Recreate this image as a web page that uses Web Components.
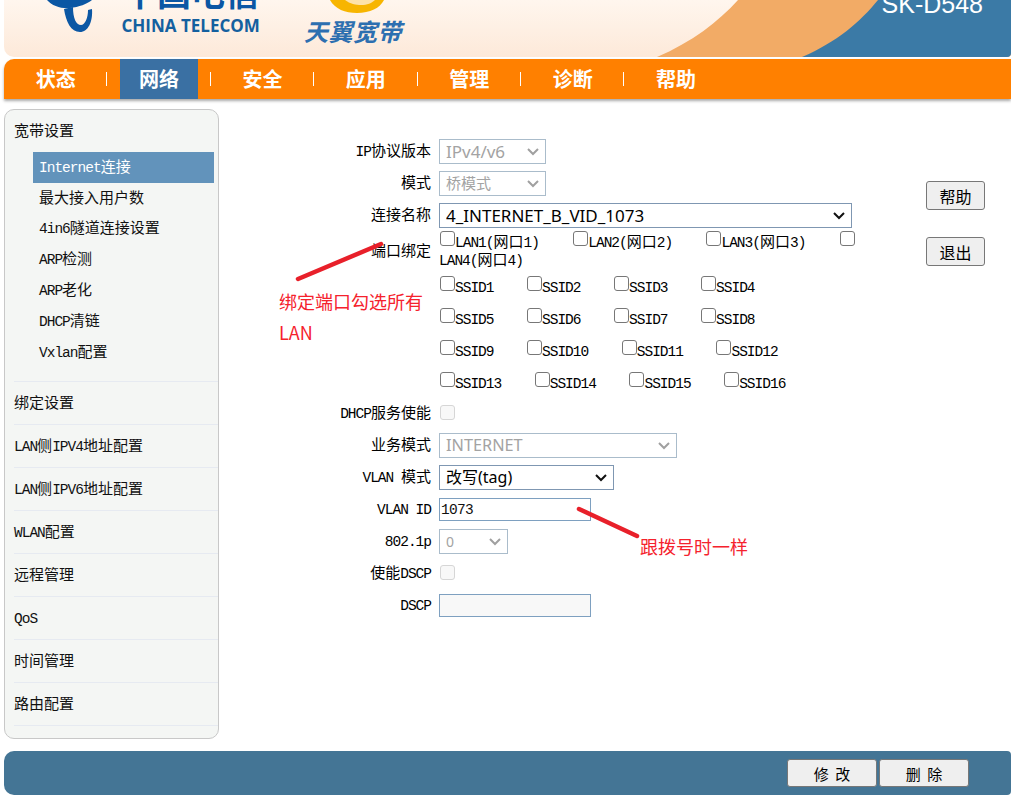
<!DOCTYPE html>
<html lang="zh">
<head>
<meta charset="utf-8">
<title>SK-D548</title>
<style>
  html, body { margin: 0; height: 795px; overflow: hidden; background: #fff; }
  body { position: relative; font: 15px "Noto Sans CJK SC", "Liberation Sans", sans-serif; color: #000; }
</style>
</head>
<body>
<tel-header></tel-header>
<tel-nav active="1" items="状态,网络,安全,应用,管理,诊断,帮助"></tel-nav>
<main-area>
  <side-bar slot="side">
    <side-group label="宽带设置">
      <side-item active label="Internet连接"></side-item>
      <side-item label="最大接入用户数"></side-item>
      <side-item label="4in6隧道连接设置"></side-item>
      <side-item label="ARP检测"></side-item>
      <side-item label="ARP老化"></side-item>
      <side-item label="DHCP清链"></side-item>
      <side-item label="Vxlan配置"></side-item>
    </side-group>
    <side-group label="绑定设置"></side-group>
    <side-group label="LAN侧IPV4地址配置"></side-group>
    <side-group label="LAN侧IPV6地址配置"></side-group>
    <side-group label="WLAN配置"></side-group>
    <side-group label="远程管理"></side-group>
    <side-group label="QoS"></side-group>
    <side-group label="时间管理"></side-group>
    <side-group label="路由配置"></side-group>
  </side-bar>
  <wan-form slot="form"></wan-form>
  <ui-btn slot="actions" label="帮助"></ui-btn>
  <ui-btn slot="actions" label="退出"></ui-btn>
</main-area>
<tel-footer>
  <ui-btn wide label="修 改"></ui-btn>
  <ui-btn wide label="删 除"></ui-btn>
</tel-footer>
<red-notes></red-notes>

<script>
// ascii runs get the half-width mono treatment, like the old bitmap font
const lat = (s) => s.replace(/[\x20-\x7e]+/g, (m) => `<m-l>${m}</m-l>`);

class MonoLatin extends HTMLElement {
  constructor() {
    super();
    this.attachShadow({ mode: 'open' }).innerHTML = `<style>:host { display: inline; white-space: pre; font-family: "Liberation Mono", monospace; font-size: 14.5px; letter-spacing: -1px; }</style><slot></slot>`;
  }
}
customElements.define('m-l', MonoLatin);

class TelHeader extends HTMLElement {
  constructor() {
    super();
    this.attachShadow({ mode: 'open' }).innerHTML = `
      <style>
        :host { display: block; position: relative; height: 57px; margin-left: 4px; overflow: hidden;
          border-radius: 0 0 4px 10px; background: linear-gradient(#fff6ee, #fde9d9); }
        svg { position: absolute; left: 0; top: 0; }
        span { position: absolute; white-space: nowrap; }
        .cn { left: 119px; top: -30px; font: 700 34px/44px "Noto Sans CJK SC", sans-serif; color: #0b57a4; }
        .en { left: 117.5px; top: 17px; font: 700 17px/18px "Open Sans", sans-serif; color: #14609f; letter-spacing: 0; }
        .tw { left: 300px; top: 15px; font: italic 700 24px/32px "Noto Sans CJK SC", sans-serif; color: #2d6fb0; letter-spacing: 0.5px; }
        .model { right: 28px; top: -10px; font: 25px/28px "Liberation Sans", sans-serif; color: #fff; }
      </style>
      <svg width="1007" height="57" viewBox="4 0 1007 57">
        <path fill="#f2ab66" d="M657 57C692 42 718 22 738 0H1011V57Z"/>
        <path fill="#3b7aa6" d="M802 57C837 42 860 22 878 0H1011V57Z"/>
        <path fill="#0b57a4" d="M47 0C52 6 62 9 70 8C79 7 87 4 92 0Z"/>
        <path fill="#0b57a4" d="M64 9L73 7C73 18 76 25 81 25C85 25 88 18 88 10L92 9C93 22 88 32 80 32C71 32 66 22 64 9Z"/>
        <path fill="#f7b500" d="M330 0C335 9 345 13 357 13C370 13 380 8 384 0Z"/>
        <path fill="#fde2a8" d="M345 0C350 4 356 5 361 5C367 5 372 3 375 0Z"/>
      </svg>
      <span class="cn">中国电信</span>
      <span class="en">CHINA TELECOM</span>
      <span class="tw">天翼宽带</span>
      <span class="model">SK-D548</span>`;
  }
}
customElements.define('tel-header', TelHeader);

class TelNav extends HTMLElement {
  constructor() {
    super();
    this.attachShadow({ mode: 'open' });
  }
  connectedCallback() {
    const items = this.getAttribute('items').split(',');
    const active = +this.getAttribute('active');
    this.shadowRoot.innerHTML = `
      <style>
        :host { display: flex; height: 40px; margin: 2px 0 10px 4px; background: #ff8000;
          border-radius: 10px 0 0 0; box-shadow: 0 2px 3px #a9a9a9; }
        div { position: relative; width: 103.4px; display: flex; justify-content: center; align-items: center; }
        b { width: 78px; height: 40px; display: flex; justify-content: center; align-items: center;
          font: 700 20px/1 "Noto Sans CJK SC", sans-serif; color: #fff; }
        .on b { background: #3a70a3; }
        i { position: absolute; right: 0; top: 13px; width: 1px; height: 14px; background: #fff; }
      </style>
      ${items.map((t, n) => `<div class="${n === active ? 'on' : ''}"><b>${t}</b>${n < items.length - 1 ? '<i></i>' : ''}</div>`).join('')}`;
  }
}
customElements.define('tel-nav', TelNav);

class MainArea extends HTMLElement {
  constructor() {
    super();
    this.attachShadow({ mode: 'open' }).innerHTML = `
      <style>
        :host { display: flex; height: 630px; margin-left: 4px; }
        .form { width: 707px; flex: none; padding-top: 26px; box-sizing: border-box; }
        .actions { width: 59px; flex: none; padding-top: 72px; display: flex; flex-direction: column; gap: 27px; }
      </style>
      <slot name="side"></slot>
      <div class="form"><slot name="form"></slot></div>
      <div class="actions"><slot name="actions"></slot></div>`;
  }
}
customElements.define('main-area', MainArea);

class SideBar extends HTMLElement {
  constructor() {
    super();
    this.attachShadow({ mode: 'open' }).innerHTML = `
      <style>
        :host { display: block; width: 215px; height: 630px; flex: none; box-sizing: border-box; padding-left: 9px;
          background: #f4f6f4; border: 1px solid #c8c8c8; border-radius: 10px; }
      </style><slot></slot>`;
  }
}
customElements.define('side-bar', SideBar);

class SideGroup extends HTMLElement {
  constructor() {
    super();
    this.attachShadow({ mode: 'open' });
  }
  connectedCallback() {
    this.shadowRoot.innerHTML = `
      <style>
        :host { display: block; border-bottom: 1px solid #e6eaf1; }
        .t { height: 42px; display: flex; align-items: center; white-space: nowrap; color: #111; }
        .t span { margin-top: -3px; }
        .sub { padding: 0 4px 13px 19px; }
        .sub[hidden] { display: none; }
      </style>
      <div class="t"><span>${lat(this.getAttribute('label'))}</span></div>
      <div class="sub" ${this.children.length ? '' : 'hidden'}><slot></slot></div>`;
  }
}
customElements.define('side-group', SideGroup);

class SideItem extends HTMLElement {
  constructor() {
    super();
    this.attachShadow({ mode: 'open' });
  }
  connectedCallback() {
    this.shadowRoot.innerHTML = `
      <style>
        :host { display: flex; align-items: center; height: 30.8px; padding-left: 6px; color: #111; white-space: nowrap; }
        :host([active]) { background: #6293bb; color: #fff; }
        span { margin-top: -4px; }
      </style>
      <span>${lat(this.getAttribute('label'))}</span>`;
  }
}
customElements.define('side-item', SideItem);

class FormRow extends HTMLElement {
  constructor() {
    super();
    this.attachShadow({ mode: 'open' });
  }
  connectedCallback() {
    const h = this.getAttribute('h') || 32;
    this.shadowRoot.innerHTML = `
      <style>
        :host { display: grid; grid-template-columns: 212px 1fr; column-gap: 8px; height: ${h}px; align-items: center; }
        .l { text-align: right; white-space: nowrap; margin-top: -4px; }
      </style>
      <div class="l">${lat(this.getAttribute('label') || '')}</div>
      <div><slot></slot></div>`;
  }
}
customElements.define('form-row', FormRow);

class UiSelect extends HTMLElement {
  constructor() {
    super();
    this.attachShadow({ mode: 'open' });
  }
  connectedCallback() {
    const w = this.getAttribute('w');
    const off = this.hasAttribute('disabled');
    const font = this.getAttribute('size') || '15';
    this.shadowRoot.innerHTML = `
      <style>
        :host { display: block; position: relative; width: ${w}px; height: 25px; }
        select { appearance: none; width: 100%; height: 100%; margin: 0; padding: 0 0 0 6px; border-radius: 0; outline: 0;
          border: 1px solid ${off ? '#aabccb' : '#7f97b2'}; background: #fff; color: ${off ? '#a3a3a3' : '#000'};
          opacity: 1; font: ${font}px "Noto Sans", "Noto Sans CJK SC", sans-serif; }
        svg { position: absolute; right: 7px; top: 8px; }
      </style>
      <select ${off ? 'disabled' : ''}><option>${this.getAttribute('value')}</option></select>
      <svg width="12" height="9" viewBox="0 0 12 9"><path d="M1 2L6 7L11 2" fill="none" stroke="${off ? '#a0a0a0' : '#111'}" stroke-width="2"/></svg>`;
  }
}
customElements.define('ui-select', UiSelect);

class UiCheck extends HTMLElement {
  constructor() {
    super();
    this.attachShadow({ mode: 'open' });
  }
  connectedCallback() {
    const off = this.hasAttribute('disabled');
    const label = this.getAttribute('label') || '';
    this.shadowRoot.innerHTML = `
      <style>
        :host { display: inline-flex; align-items: center; white-space: nowrap; height: 18px; }
        input { appearance: none; width: 15px; height: 15px; margin: ${off ? '0' : '-3px'} 0 0 1px; box-sizing: border-box;
          border: ${off ? '1px solid #d6d6d6' : '1.5px solid #777'}; border-radius: 3px; background: ${off ? '#f8f8f8' : '#fff'}; flex: none; }
      </style>
      <input type="checkbox" ${off ? 'disabled' : ''}><span>${lat(label)}</span>`;
  }
}
customElements.define('ui-check', UiCheck);

class UiBtn extends HTMLElement {
  constructor() {
    super();
    this.attachShadow({ mode: 'open' });
  }
  connectedCallback() {
    const wide = this.hasAttribute('wide');
    this.shadowRoot.innerHTML = `
      <style>
        :host { display: block; flex: none; }
        button { display: block; margin: 0; padding: 0; background: #efefef; color: #000; cursor: default;
          width: ${wide ? '90px' : '59px'}; height: ${wide ? '28px' : '29px'};
          border: ${wide ? '1.5px' : '1px'} solid #777; border-radius: 3px;
          font: ${wide ? '15px' : '16px'} "Noto Sans CJK SC", sans-serif; white-space: pre; }
      </style>
      <button>${this.getAttribute('label').replace(' ', '  ')}</button>`;
  }
}
customElements.define('ui-btn', UiBtn);

class WanForm extends HTMLElement {
  constructor() {
    super();
    const check = (t) => `<ui-check label="${t}"></ui-check>`;
    const ssidRow = (a) => `<div class="ssid">${a.map((n) => check('SSID' + n)).join('')}</div>`;
    this.attachShadow({ mode: 'open' }).innerHTML = `
      <style>
        :host { display: block; }
        .ports { display: flex; gap: 33.3px; }
        .ssid { display: flex; gap: 32.5px; margin-top: 0; }
        .l4 { line-height: 20px; }
        input[type=text] { display: block; margin: 0; padding: 1px 0 0 1px; width: 152px; height: 23px; box-sizing: border-box;
          border: 1px solid #7ea0c0; border-radius: 0; outline: 0; background: #fff; font: 14.5px "Liberation Mono", monospace; letter-spacing: -0.7px; color: #111; }
        input[disabled] { background: #f8f8f8; }
      </style>
      <form-row label="IP协议版本"><ui-select w="107" disabled value="IPv4/v6" size="17"></ui-select></form-row>
      <form-row label="模式"><ui-select w="107" disabled value="桥模式"></ui-select></form-row>
      <form-row label="连接名称"><ui-select w="413" value="4_INTERNET_B_VID_1073" size="17"></ui-select></form-row>
      <form-row label="端口绑定" h="38">
        <div class="ports">${check('LAN1(网口1)')}${check('LAN2(网口2)')}${check('LAN3(网口3)')}<ui-check></ui-check></div>
        <div class="l4">${lat('LAN4(网口4)')}</div>
      </form-row>
      <form-row>${ssidRow([1, 2, 3, 4])}</form-row>
      <form-row>${ssidRow([5, 6, 7, 8])}</form-row>
      <form-row>${ssidRow([9, 10, 11, 12])}</form-row>
      <form-row>${ssidRow([13, 14, 15, 16])}</form-row>
      <form-row label="DHCP服务使能"><ui-check disabled></ui-check></form-row>
      <form-row label="业务模式"><ui-select w="238" disabled value="INTERNET" size="16.3"></ui-select></form-row>
      <form-row label="VLAN 模式"><ui-select w="175" value="改写(tag)" size="16"></ui-select></form-row>
      <form-row label="VLAN ID"><input type="text" value="1073"></form-row>
      <form-row label="802.1p"><ui-select w="69" disabled value="0" size="14"></ui-select></form-row>
      <form-row label="使能DSCP"><ui-check disabled></ui-check></form-row>
      <form-row label="DSCP"><input type="text" disabled></form-row>`;
  }
}
customElements.define('wan-form', WanForm);

class TelFooter extends HTMLElement {
  constructor() {
    super();
    this.attachShadow({ mode: 'open' }).innerHTML = `
      <style>
        :host { display: flex; justify-content: flex-end; align-items: center; gap: 2px; box-sizing: border-box;
          height: 44px; margin: 12px 0 0 4px; padding: 0 42px 0 0; background: #447595; border-radius: 10px 4px 4px 10px; }
      </style><slot></slot>`;
  }
}
customElements.define('tel-footer', TelFooter);

// the red marks someone painted on top of the screenshot
class RedNotes extends HTMLElement {
  constructor() {
    super();
    this.attachShadow({ mode: 'open' }).innerHTML = `
      <style>
        :host { position: absolute; inset: 0; pointer-events: none; color: #f5222d; font-size: 18px; line-height: 24px; }
        svg { position: absolute; left: 0; top: 0; }
        span { position: absolute; white-space: nowrap; }
      </style>
      <svg width="1011" height="795">
        <g stroke="#e8202a" stroke-width="4.5" stroke-linecap="round">
          <line x1="298" y1="279" x2="381" y2="244"/>
          <line x1="579" y1="509" x2="637" y2="536"/>
        </g>
      </svg>
      <span style="left:279px;top:289px">绑定端口勾选所有</span>
      <span style="left:279px;top:320px">LAN</span>
      <span style="left:640px;top:534px">跟拨号时一样</span>`;
  }
}
customElements.define('red-notes', RedNotes);
</script>
</body>
</html>
